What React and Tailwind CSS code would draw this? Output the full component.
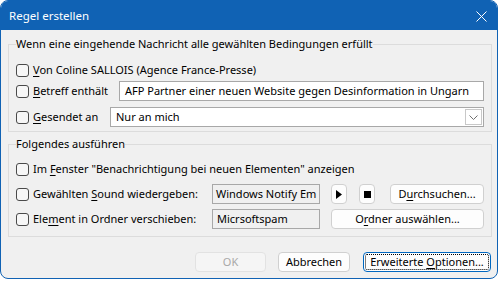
import React from "react";

const font = { fontFamily: '"Noto Sans", "Open Sans", sans-serif' };

function U({ children }) {
  return <span className="underline underline-offset-[2px] decoration-[1px]">{children}</span>;
}

function Check() {
  return <div className="w-[13px] h-[13px] shrink-0 rounded-[3px] border border-[#4a4a4a] bg-[#f7f7f7]" />;
}

function Btn({ children, className = "" }) {
  return (
    <div className={"h-[20px] shrink-0 flex items-center justify-center rounded-[4px] border border-[#d0d0d0] bg-[#fdfdfd] text-black whitespace-nowrap " + className}>
      {children}
    </div>
  );
}

export default function App() {
  return (
    <div className="w-[500px] h-[281px] bg-white overflow-hidden text-[11px] text-black whitespace-nowrap" style={font}>
      <div className="w-[498px] h-[279px] rounded-[8px] border border-[#1062b4] bg-[#f0f0f0] overflow-hidden flex flex-col">
        <div className="h-[29px] shrink-0 bg-[#1062b4] flex items-center justify-between pl-[8px] pr-[10px]">
          <span className="text-white text-[11.5px] leading-[16px]">Regel erstellen</span>
          <svg width="11" height="11" viewBox="0 0 11 11" className="mt-[1px]">
            <path d="M0.5 0.5 L10.5 10.5 M10.5 0.5 L0.5 10.5" stroke="white" strokeWidth="1" />
          </svg>
        </div>

        <fieldset className="ml-[7px] mt-[6px] w-[484px] min-w-0 border border-[#dcdcdc] pl-[7px] pr-[7px] pb-[4px]">
          <legend className="px-0 leading-[16px]">Wenn eine eingehende Nachricht alle gewählten Bedingungen erfüllt</legend>
          <div className="mt-[8px] h-[20px] flex items-center gap-[4px]">
            <Check />
            <span><U>V</U>on Coline SALLOIS (Agence France-Presse)</span>
          </div>
          <div className="mt-[1px] h-[20px] flex items-center">
            <div className="w-[103px] shrink-0 flex items-center gap-[4px]">
              <Check />
              <span><U>B</U>etreff enthält</span>
            </div>
            <div className="flex-1 min-w-0 h-[20px] bg-white border border-[#a8a8a8] flex items-center px-[5px] overflow-hidden">
              AFP Partner einer neuen Website gegen Desinformation in Ungarn
            </div>
          </div>
          <div className="mt-[6px] h-[20px] flex items-center">
            <div className="w-[94px] shrink-0 flex items-center gap-[4px]">
              <Check />
              <span><U>G</U>esendet an</span>
            </div>
            <div className="flex-1 min-w-0 h-[20px] bg-white border border-[#a8a8a8] flex items-center pl-[5px] pr-[1px]">
              <span className="flex-1">Nur an mich</span>
              <div className="w-[17px] h-[16px] border border-[#c8c8c8] bg-white flex items-center justify-center">
                <svg width="9" height="5" viewBox="0 0 9 5">
                  <path d="M0.5 0.5 L4.5 4.5 L8.5 0.5" stroke="#707070" strokeWidth="1" fill="none" />
                </svg>
              </div>
            </div>
          </div>
        </fieldset>

        <fieldset className="ml-[7px] mt-[4px] w-[484px] min-w-0 border border-[#dcdcdc] pl-[7px] pr-[7px] pb-[7px]">
          <legend className="px-0 leading-[16px]">Folgendes ausführen</legend>
          <div className="mt-[7px] h-[20px] flex items-center gap-[4px]">
            <Check />
            <span>Im <U>F</U>enster "Benachrichtigung bei neuen Elementen" anzeigen</span>
          </div>
          <div className="mt-[5px] h-[20px] flex items-center">
            <div className="w-[196px] shrink-0 flex items-center gap-[4px]">
              <Check />
              <span>Gewählten <U>S</U>ound wiedergeben:</span>
            </div>
            <div className="w-[108px] shrink-0 h-[20px] border border-[#a8a8a8] bg-[#f0f0f0] flex items-center px-[3px] overflow-hidden">
              Windows Notify Em
            </div>
            <Btn className="ml-[11px] w-[16px]">
              <svg width="6" height="9" viewBox="0 0 6 9"><path d="M0 0 L6 4.5 L0 9 Z" fill="black" /></svg>
            </Btn>
            <Btn className="ml-[12px] w-[16px]">
              <div className="w-[7px] h-[7px] bg-black" />
            </Btn>
            <Btn className="ml-[15px] flex-1 min-w-0">
              <span>D<U>u</U>rchsuchen...</span>
            </Btn>
          </div>
          <div className="mt-[5px] h-[20px] flex items-center">
            <div className="w-[196px] shrink-0 flex items-center gap-[4px]">
              <Check />
              <span>Ele<U>m</U>ent in Ordner verschieben:</span>
            </div>
            <div className="w-[108px] shrink-0 h-[20px] border border-[#a8a8a8] bg-[#f0f0f0] flex items-center px-[4px]">
              Micrsoftspam
            </div>
            <Btn className="ml-[11px] flex-1 min-w-0">
              <span>O<U>r</U>dner auswählen...</span>
            </Btn>
          </div>
        </fieldset>

        <div className="mt-[15px] flex justify-end pr-[6px] gap-[12px]">
          <div className="w-[71px] h-[20px] rounded-[4px] border border-[#e2e2e2] bg-[#f5f5f5] text-[#a8a8a8] flex items-center justify-center">OK</div>
          <Btn className="w-[72px]">Abbrechen</Btn>
          <div className="ml-[1px] w-[128px] h-[20px] shrink-0 rounded-[4px] border border-[#0067c0] bg-[#fdfdfd] p-[1px]">
            <div className="w-full h-full border border-dotted border-black rounded-[2px] flex items-center justify-center">
              <span>Erweiterte <U>O</U>ptionen...</span>
            </div>
          </div>
        </div>
      </div>
    </div>
  );
}
